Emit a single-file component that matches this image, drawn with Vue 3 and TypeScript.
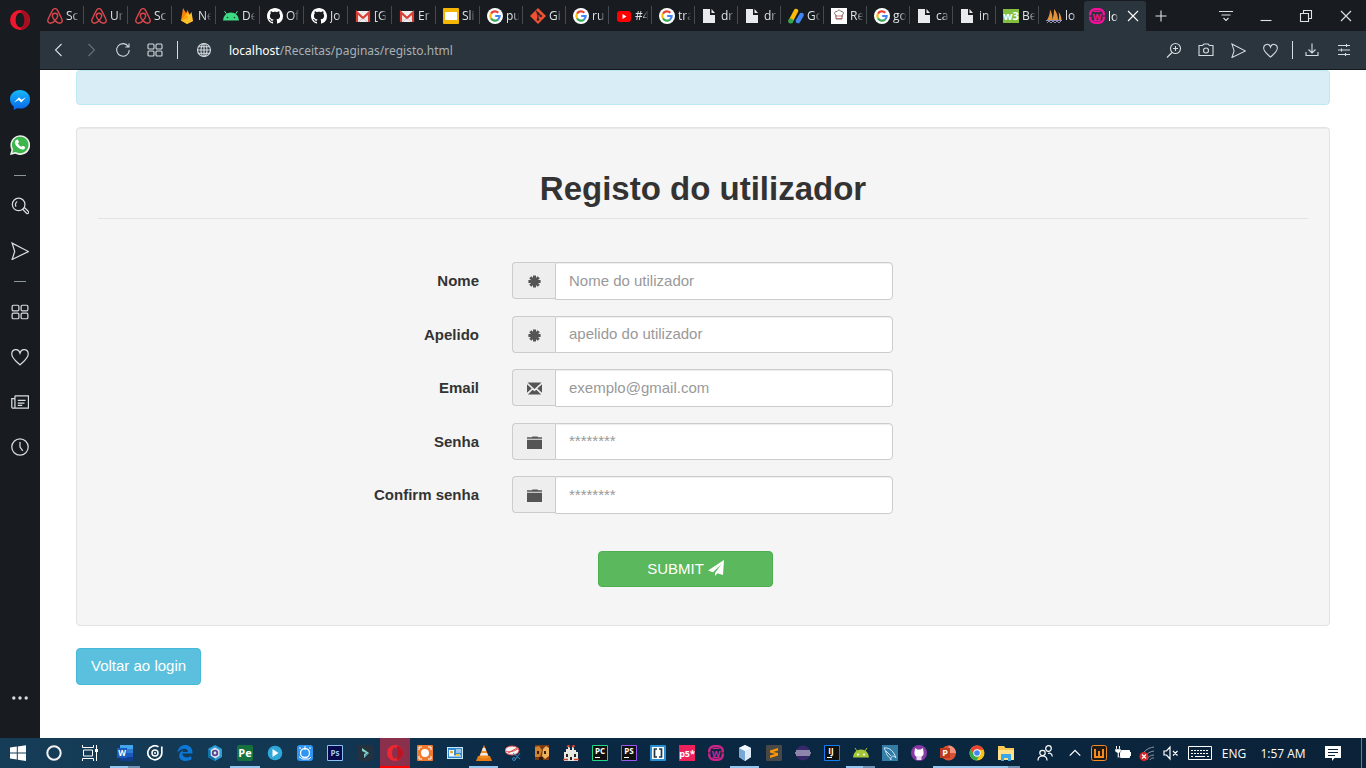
<script setup lang="ts">
import { ref } from 'vue'

interface Tab { icon: string; title: string }
interface Field { id: string; label: string; placeholder: string; type: string; icon: string }
interface Task { name: string; icon: string; state?: 'open' | 'stack' | 'active' }

const github = 'M8 0C3.58 0 0 3.58 0 8c0 3.54 2.29 6.53 5.47 7.59.4.07.55-.17.55-.38 0-.19-.01-.82-.01-1.49-2.01.37-2.53-.49-2.69-.94-.09-.23-.48-.94-.82-1.13-.28-.15-.68-.52-.01-.53.63-.01 1.08.58 1.23.82.72 1.21 1.87.87 2.33.66.07-.52.28-.87.51-1.07-1.78-.2-3.64-.89-3.64-3.95 0-.87.31-1.59.82-2.15-.08-.2-.36-1.02.08-2.12 0 0 .67-.21 2.2.82.64-.18 1.32-.27 2-.27s1.36.09 2 .27c1.53-1.04 2.2-.82 2.2-.82.44 1.1.16 1.92.08 2.12.51.56.82 1.27.82 2.15 0 3.07-1.87 3.75-3.65 3.95.29.25.54.73.54 1.48 0 1.07-.01 1.93-.01 2.2 0 .21.15.46.55.38A8.01 8.01 0 0 0 16 8c0-4.42-3.58-8-8-8z'

const letters = (text: string, x: number, y: number, size: number, fill: string) =>
  `<text x="${x}" y="${y}" font-family="Open Sans, sans-serif" font-weight="700" font-size="${size}" fill="${fill}" text-anchor="middle">${text}</text>`

const wamp = (color: string) =>
  `<rect x="1.200" y="1.200" width="13.600" height="13.600" rx="5" fill="none" stroke="${color}" stroke-width="2.400"/><path d="M0 8h3m10 0h3" stroke="#2b2430" stroke-width="1"/><path d="M4.500 3.500h7M4.500 12.500h7" stroke="${color}" stroke-width="1"/>${letters('W', 8, 11.5, 9, color)}`

// Every glyph is drawn on a 16 x 16 grid.
const art: Record<string, string> = {
  airbnb: '<path d="M8 12.500C6 10.300 5.300 9 5.300 7.900a2.700 2.700 0 0 1 5.400 0C10.700 9 10 10.300 8 12.500c-1.300 1.700-2.900 2.700-4.500 2.700-2 0-3.200-1.700-2.500-3.700C2.200 8.600 4.300 4.400 5.800 1.900 6.900.2 9.100.2 10.200 1.900c1.500 2.500 3.600 6.700 4.800 9.600.7 2-.5 3.700-2.500 3.700-1.600 0-3.200-1-4.500-2.700Z" fill="none" stroke="#d9474d" stroke-width="1.400"/>',
  firebase: '<path d="M2 12.500 4 0l3 5 1.500-3L14 13l-6 3Z" fill="#f5820d"/><path d="m2 12.500 6.500-8L10.500 7l2-3L14 13l-6 3Z" fill="#fbc02d"/><path d="m2 12.500 5-6.500 2 4Z" fill="#ffa000"/>',
  android: '<path d="M0 12.500a8 8 0 0 1 16 0Z" fill="#3ddc84"/><path d="m3.500 6-2-3m11 3 2-3" stroke="#3ddc84"/><circle cx="4.500" cy="9.500" r=".8" fill="#20332c"/><circle cx="11.500" cy="9.500" r=".8" fill="#20332c"/>',
  github: `<path d="${github}" fill="#fff"/>`,
  gmail: '<path d="M1 3h14v11H1Z" fill="#eee"/><path d="M2 14V4.500L8 10l6-5.500V14" fill="none" stroke="#d93f35" stroke-width="2.200"/><path d="m4 14 3-3.500m5 3.500-3-3.500" stroke="#c9c9c9"/>',
  slides: '<rect width="16" height="16" rx="1" fill="#f6b704"/><rect x="2" y="4" width="12" height="8" fill="#fff"/>',
  google: '<circle cx="8" cy="8" r="8" fill="#fff"/><g fill="none" stroke-width="2.100"><path d="M11.300 4.700A4.700 4.700 0 0 0 4 5.600" stroke="#ea4335"/><path d="M4 5.600a4.700 4.700 0 0 0 0 4.800" stroke="#fbbc05"/><path d="M4 10.400a4.700 4.700 0 0 0 7 1.200" stroke="#34a853"/><path d="M11 11.600A4.700 4.700 0 0 0 12.700 8H8.200" stroke="#4285f4"/></g>',
  git: '<path d="m8 0 8 8-8 8-8-8Z" fill="#f05033"/><path d="m6 3 5 5M8 5.500v6" stroke="#302222" stroke-width="1.200"/><circle cx="8" cy="5.500" r="1.300" fill="#302222"/><circle cx="10.800" cy="8" r="1.300" fill="#302222"/><circle cx="8" cy="11.500" r="1.300" fill="#302222"/>',
  youtube: '<rect x="1" y="3" width="14" height="11" rx="3" fill="#f00"/><path d="m6.500 6 4 2.500-4 2.500Z" fill="#fff"/>',
  file: '<path d="M1 1h7v6h5v8H1Z" fill="#e8eaed"/><path d="m9.500 1 3.500 4H9.500Z" fill="#e8eaed"/>',
  ads: '<path d="M8 3 3 12.500" stroke="#fbbc04" stroke-width="4.500" stroke-linecap="round"/><path d="m13.500 7-3.500 6" stroke="#4285f4" stroke-width="4.500" stroke-linecap="round"/><circle cx="2.700" cy="13" r="2.500" fill="#34a853"/>',
  chef: '<path d="M0 0h16v16H0Z" fill="#fff"/><path d="M5 7C2.500 6 3.500 3 6 3.500 7 1.500 9.500 2 10 3.500c3-.5 3 3 1 3.500v4H5Z" fill="none" stroke="#604a4a" stroke-width=".8"/><path d="M4 8h8M5 10.500h6" stroke="#b55" stroke-width=".8"/>',
  w3: `<path d="M0 1h16v14H0Z" fill="#83bf3f"/>${letters('w3', 8, 12, 11, '#fff')}`,
  sails: '<path d="M1 12C3 9 4 5 4 1.500 6 5 7 9 6 12Zm5 0c2-4 2-8 2-11 3 3 4 8 4 11Zm6.500 0c1-2.500.5-6 0-8 2 2 3 5.500 3 8Z" fill="#e69338"/><path d="M0 12.500h16M1 15l2-2 2 2 2-2 2 2 2-2 2 2 2-2" fill="none" stroke="#8f8fb3"/>',
  wampPink: wamp('#f5109a'),
  wampDark: wamp('#d0238a'),
  opera: '<ellipse cx="8" cy="8" rx="8" ry="8" fill="#ee172d"/><path d="M9 0c9 1 9 15 0 16Z" fill="#a60f20"/><ellipse cx="8" cy="8" rx="3.500" ry="5.900" fill="#181c20"/>',
  operaTask: '<circle cx="8" cy="8" r="8" fill="#ee2730"/><path d="M10 1c8 1 8 13 0 14Z" fill="#b81625"/><ellipse cx="8" cy="8" rx="3" ry="5.700" fill="#8b304c"/>',
  messenger: '<defs><linearGradient id="msg" x2="0" y2="1"><stop stop-color="#16b9fa"/><stop offset="1" stop-color="#0865ea"/></linearGradient></defs><path d="M8 0C3.500 0 0 3.200 0 7.400c0 2.400 1.100 4.400 3 5.700V16l2.700-1.500c5.500 1.400 10.300-2 10.300-7C16 3.200 12.500 0 8 0Z" fill="url(#msg)"/><path d="m3.200 10 4-4.200 2 2 3.600-2L9 10 7 8Z" fill="#fff"/>',
  whatsapp: '<path d="m0 16 1.200-4.200A7.900 7.900 0 1 1 4.300 15Z" fill="#f0f0ee"/><path d="m1.800 14.200.8-2.700a6.600 6.600 0 1 1 2 2Z" fill="#3cb54a"/><path d="M5.300 3.800c.8-.6 1.300.2 1.900 1.700l-.8 1.200c.6 1.200 1.500 2 2.800 2.700l1-.9c1.500.5 2 .9 1.900 1.600-.8 2.500-3.700 1.500-5.700-.1-2.500-2.100-3.600-4.900-1.100-6.200Z" fill="#fff"/>',
  search: '<circle cx="6.800" cy="6.600" r="5.600"/><path d="m10.500 11 1.500-1.600 3.300 3.300a1.100 1.100 0 0 1-1.500 1.700ZM4.500 8.500c-1-1.500-.5-3.500 1-4.500"/>',
  send: '<path d="M1 1 15.500 8.500 1 15.500 3.300 8.500Z"/>',
  grid: '<rect x="1" y="2" width="6" height="5" rx="1"/><rect x="9" y="2" width="6" height="5" rx="1"/><rect x="1" y="9" width="6" height="5" rx="1"/><rect x="9" y="9" width="6" height="5" rx="1"/>',
  heart: '<path d="M8 4.500C6.500-.5.500 1.200.7 5.600.8 9.200 4.200 11.500 8 15c3.800-3.500 7.200-5.800 7.300-9.400C15.500 1.200 9.500-.5 8 4.500Z"/>',
  news: '<path d="M3.500 2.500h12v11H1.700A1 1 0 0 1 .7 12.500V5h2.800m0-2.500V13M6 6.500h7M6 9h6M6 11h4"/>',
  clock: '<circle cx="8" cy="8" r="7.300"/><path d="M8 3.500V8l2.500 3.500"/>',
  dots: '<g fill="currentColor" stroke="none"><circle cx="2.500" cy="8" r="1.500"/><circle cx="8" cy="8" r="1.500"/><circle cx="13.500" cy="8" r="1.500"/></g>',
  back: '<path d="M10.500 2 4.500 8l6 6"/>',
  forward: '<path d="m5.500 2 6 6-6 6"/>',
  reload: '<path d="M13.300 4.500A6.300 6.300 0 1 0 14.300 8M14 1.500V5h-3.700"/>',
  globe: '<circle cx="8" cy="8" r="6.500"/><ellipse cx="8" cy="8" rx="3" ry="6.500"/><path d="M1.500 8h13M2.500 4.800h11m-11 6.400h11M8 1.500v13"/>',
  zoomIn: '<circle cx="9.500" cy="6.500" r="5"/><path d="M6 10.500 1 15.500M9.500 4v5M7 6.500h5"/>',
  camera: '<path d="M1 3.500h3.500L6 2h4l1.500 1.500H15v10H1Z"/><circle cx="8" cy="8.500" r="2.500"/>',
  download: '<path d="M8 1.500v9M4.500 7.500 8 11l3.500-3.500M2 10v3.500h12V10"/>',
  sliders: '<path d="M2 3.500h12M2 8h12M2 12.500h12M10.500 2v3M5.500 6.500v3M9.500 11v3"/>',
  plus: '<path d="M8 2.500v11M2.500 8h11"/>',
  close: '<path d="m3 3 10 10M13 3 3 13"/>',
  minimize: '<path d="M2.500 12.500h11"/>',
  restore: '<path d="M2.500 5.500h8v8h-8ZM5.500 5V2.500h8v8H11"/>',
  menu: '<path d="M1 3.500h14M3.500 7h9M5.500 10 8 12.500l2.500-2.500"/>',
  asterisk: '<g fill="none" stroke="currentColor" stroke-width="3.200"><path d="M8 1.500v13M1.500 8h13M3.500 3.500l9 9M12.500 3.500l-9 9"/></g>',
  envelope: '<path d="M.5 1.500h15L8 8.500ZM0 3.500 5 8 0 12.500ZM16 3.500 11 8l5 4.500ZM1 14.500l5-5.300 2 1.800 2-1.800 5 5.300Z" fill="currentColor"/>',
  folder: '<path d="M0 5h16v10H0ZM0 4V2.500h5l1-1h5l1 1h4V4Z" fill="currentColor"/>',
  plane: '<path d="M16 0 0 10.500l5 1.700L13.500 4 7 13v3l2.500-2.700L15 15Z" fill="currentColor"/>',
  windows: '<path d="m0 2.500 6.800-1v6H0Zm7.800-1.100L16 .2v7.300H7.800ZM0 8.500h6.800v6L0 13.500Zm7.800 0H16V16l-8.200-1.300Z" fill="#fff"/>',
  cortana: '<circle cx="8" cy="8" r="6.700" fill="none" stroke="#f2f2f2" stroke-width="2"/>',
  taskview: '<path d="M.5 0v2.500h11V0M1.500 5h9v6h-9ZM.5 16v-2.500h11V16M14.500 0v16" fill="none" stroke="#fff"/><path d="M13 4h3v3h-3Z" fill="#fff"/>',
  word: `<path d="M3 0h13v4H3Z" fill="#41a5ee"/><path d="M3 4h13v4H3Z" fill="#2b7cd3"/><path d="M3 8h13v4H3Z" fill="#185abd"/><path d="M3 12h13v4H3Z" fill="#103f91"/><path d="M0 3h10v10H0Z" fill="#1c5abb"/>${letters('W', 5, 11, 8, '#fff')}`,
  groove: '<path d="M11.500 1.800A7 7 0 1 0 14.800 7V1.500" fill="none" stroke="#fff" stroke-width="1.700"/><circle cx="8" cy="8" r="3" fill="none" stroke="#fff" stroke-width="1.500"/><circle cx="8" cy="8" r="1" fill="#fff"/>',
  edge: '<path d="M.5 7.500C1.500-2.500 16-2.500 15.500 8.500H5.200c.5 4.500 5.800 4.600 9.100 2.800v3.200C8 18-.5 14.800 3 7.800 4 6 5.800 5 7.500 4.700 6 5.200 5.400 6.300 5.300 6.900h5.600c0-4.800-7.500-4-10.400.6Z" fill="#0b78d7"/>',
  hex: '<path d="m8 0 7 4v8l-7 4-7-4V4Z" fill="#2ba0d8"/><path d="m8 2.500 4.500 2.800v5.400L8 13.500l-4.500-2.800V5.300Z" fill="#e7e4f2"/><path d="M1 4v8l7 4v-2.500l-4.500-3V5.500Z" fill="#1272a8"/><circle cx="8" cy="8" r="3.200" fill="#56478c"/><circle cx="8" cy="8" r="1.400" fill="#e7e4f2"/>',
  pe: `<rect width="16" height="16" rx="2" fill="#15713d"/>${letters('Pe', 8, 12, 11, '#fff')}`,
  player: '<circle cx="8" cy="8" r="7.300" fill="#2da8d8"/><path d="m5.500 4 6 4-6 4Z" fill="#fff"/>',
  gear: '<rect width="16" height="16" rx="3" fill="#2f94f3"/><circle cx="8" cy="8" r="4.500" fill="none" stroke="#fff" stroke-width="1.300"/><path d="M8 1v4M2 3h2m8 0h2M2 12c2 0 2 2 4 2h6l2-2" fill="none" stroke="#fff"/>',
  photoshop: `<path d="M.5.5h15v15H.5Z" fill="#06094b" stroke="#8cbff5"/>${letters('Ps', 8, 11, 8, '#9dc9f5')}`,
  filmora: '<rect width="16" height="16" rx="2" fill="#25313e"/><path d="m5 3 7 5-5 5V9l2-1-4-2Z" fill="#82d3c5"/><path d="m9 9 3-1-5 5Z" fill="#4588ac"/>',
  recorder: '<rect width="16" height="16" rx="1" fill="#ee7b2f"/><circle cx="8" cy="8" r="4" fill="#fff"/><path d="M2 5V2h3m6 0h3v3m0 6v3h-3m-6 0H2v-3" fill="none" stroke="#fff"/>',
  contact: '<path d="M0 2h16v12H0Z" fill="#c6e8fb"/><path d="M1 3h14v10H1Z" fill="#328bd1"/><path d="M2 5h5v6H2Z" fill="#fff"/><circle cx="4.500" cy="7" r="1.500" fill="#e5a332"/><path d="M9 5h5M9 7h5M2 11h12" stroke="#fff"/><path d="M9 9h4v2H9Z" fill="#f6c94e"/>',
  vlc: '<path d="m2 11-2 5h16l-2-5Z" fill="#e57b13"/><path d="m8 0 5 12c-2 2-8 2-10 0Z" fill="#f68c1f"/><path d="m6.800 3h2.400L10 6H6Zm-1.800 5h6l1 2.500H4Z" fill="#eee"/>',
  snip: '<ellipse cx="7" cy="5.500" rx="7" ry="4.500" fill="#f4f4f4" stroke="#d94845"/><path d="M1 6C5 8 10 6 14 3M3 8l9-5" stroke="#db4c4a" fill="none"/><path d="m8 8 7 6m0-6-5 7" stroke="#3b89bf"/><circle cx="9" cy="14" r="1.500" fill="none" stroke="#3b89bf"/>',
  game: '<path d="M1 0h14v15H1Z" fill="#7a3a12"/><path d="m1 2 4-1 3 4-2 7H1Z" fill="#d0852c"/><path d="m9 4 3-3 3 2v8l-4 3-3-3Z" fill="#eeb05c"/><path d="M4 6v3m2 3v3M11 6v3m-3 3v3" stroke="#291407" stroke-width="1.800"/>',
  castle: '<path d="M1 16V7h2V4h2V1l2 2v2h2V1l2 2v2h2v2h2v9Z" fill="#e9e7e2"/><path d="M3 9h2v3H3Zm8 0h2v3h-2ZM7 12h2v3H7Z" fill="#252525"/><path d="M4 2 6 0v2m3 0 2-2v2M0 14.500h5m6 0h5" stroke="#d3422e" stroke-width="1.500"/>',
  pycharm: `<path d="M.5.5h15v15H.5Z" fill="#101010" stroke="#21d789"/>${letters('PC', 8, 9, 8, '#fff')}<path d="M3 12.500h5" stroke="#fff"/>`,
  phpstorm: `<path d="M.5.5h15v15H.5Z" fill="#101010" stroke="#9b57ef"/>${letters('PS', 8, 9, 8, '#fff')}<path d="M3 12.500h5" stroke="#fff"/>`,
  brackets: '<rect width="16" height="16" rx="1" fill="#2a8fd0"/><path d="M2 2h12v12H2Z" fill="#fff"/><path d="M7 4H4.500v8H7m2-8h2.500v8H9" fill="none" stroke="#213449" stroke-width="1.700"/>',
  p5: `<path d="M0 0h16v16H0Z" fill="#ed225d"/>${letters('p5*', 8, 12, 9, '#fff')}`,
  cube: '<path d="m8 0 6 3v9l-6 4-6-4V3Z" fill="#bad6f0"/><path d="m2 3 6 3v10l-6-4Z" fill="#7ba7d5"/><path d="m8 6 6-3v9l-6 4Z" fill="#dceaf9"/><path d="m2 3 6-3 6 3-6 3Z" fill="#f3faff"/>',
  sublime: '<rect width="16" height="16" rx="1" fill="#484848"/><path d="m12 3-8 2.500v2L9 9l-5 1.500V13l8-2.500V8L7 7l5-1.500Z" fill="#ff9800"/>',
  eclipse: '<circle cx="8" cy="8" r="7.500" fill="#35296a"/><path d="M1 6h14M0 8h16M1 10h14" stroke="#e5e1ee" stroke-width="1.200"/>',
  intellij: `<path d="M.5.5h15v15H.5Z" fill="#101010" stroke="#147ef5"/>${letters('IJ', 7, 9, 8, '#fff')}<path d="M3 12.500h5" stroke="#fff"/>`,
  androidTask: '<path d="M0 12.500a8 8 0 0 1 16 0Z" fill="#a4c639"/><path d="m4 6-2-3m10 3 2-3" stroke="#a4c639"/><circle cx="5" cy="9.500" r="1" fill="#fff"/><circle cx="11" cy="9.500" r="1" fill="#fff"/>',
  mysql: '<path d="M0 0h16v16H0Z" fill="#347da6"/><path d="M2 3c6-1 10 4 12 10-3-4-6-1-5 2-1-3-4-3-5-8ZM4 6l5 5" fill="none" stroke="#c9e5f4"/>',
  desktop: '<circle cx="8" cy="8" r="8" fill="#8739a6"/><path d="m4 3 2.500 1.500h3L12 3l.5 4c.5 3-1 5-4.500 5S3 10 3.500 7Z" fill="#fff"/><path d="M5.500 11h5v4h-5Z" fill="#e9dcf0"/>',
  powerpoint: `<circle cx="8.500" cy="8" r="7.500" fill="#d75235"/><path d="M8.500.5a7.500 7.500 0 0 1 7.500 7.500H8.500Z" fill="#f2937e"/><path d="M0 3h10v10H0Z" fill="#bd3a1c"/>${letters('P', 5, 11, 9, '#fff')}`,
  chrome: '<circle cx="8" cy="8" r="7.500" fill="#fbc116"/><path d="M1.500 4.300A7.500 7.500 0 0 1 14.700 4.700H8L5 10Z" fill="#e74436"/><path d="M1.500 4.300a7.500 7.500 0 0 0 6 11.200L11 9.500 5 10Z" fill="#35a852"/><circle cx="8" cy="8" r="3.700" fill="#fff"/><circle cx="8" cy="8" r="2.800" fill="#4285f4"/>',
  explorer: '<path d="M0 1h6l1.500 2H16v12H0Z" fill="#f7ca55"/><path d="M0 5h16v10H0Z" fill="#ffe18a"/><path d="M3 16V9h10v7h-3v-3H6v3Z" fill="#39a8e8"/>',
  people: '<g fill="none" stroke="#fff" stroke-width="1.200"><circle cx="11.500" cy="3.500" r="2.800"/><circle cx="5.500" cy="8" r="2.700"/><path d="M1 15.500c0-6 9-6 9 0M11 8.500c2.500-1 4 .5 4.300 3"/></g>',
  chevron: '<path d="m2 11 6-6 6 6" fill="none" stroke="#fff" stroke-width="1.500"/>',
  wampTray: `<rect x=".5" y=".5" width="15" height="15" rx="2" fill="#201b18" stroke="#f58a1f"/><path d="M4 4v8h8V4M8 6v6" fill="none" stroke="#f58a1f" stroke-width="2"/>`,
  battery: '<path d="M5.500 5.500h9v7h-9ZM15 7.500h1v3h-1Z" fill="#fff" stroke="#fff"/><path d="M1.500 1v3m3-3v3" stroke="#fff"/><path d="M0 4h6v2.500L4 8v3.500h1v1H2.500V8L0 6.500Z" fill="#fff" stroke="#0a2438" stroke-width=".4"/>',
  wifi: '<g fill="none" stroke="#8897a5"><path d="M2 14C3 7 8 3 15 2M5 15c1-5 4-8 10-9M8 15c1-3 3-5 7-5M11 15c1-2 2-2 4-2"/></g><circle cx="5" cy="11.500" r="4.500" fill="#d42a2a"/><path d="m3 9.500 4 4m0-4-4 4" stroke="#fff" stroke-width="1.200"/>',
  mute: '<path d="M1 6h2.500l3.500-4v12L3.500 10H1ZM10 6l4.500 4.500m0-4.500L10 10.500" fill="none" stroke="#fff" stroke-width="1.200"/>',
  notice: '<path d="M0 1h16v12H9.500l-2.500 3v-3H0Z" fill="#fff"/><path d="M3 4.500h10M3 7.500h10M3 10.500h7" stroke="#0a2238"/>',
}

const tabs: Tab[] = [
  { icon: 'airbnb', title: 'Sc' }, { icon: 'airbnb', title: 'Ur' }, { icon: 'airbnb', title: 'Sc' },
  { icon: 'firebase', title: 'Ne' }, { icon: 'android', title: 'De' }, { icon: 'github', title: 'Of' },
  { icon: 'github', title: 'Jo' }, { icon: 'gmail', title: '[G' }, { icon: 'gmail', title: 'Er' },
  { icon: 'slides', title: 'Sli' }, { icon: 'google', title: 'pu' }, { icon: 'git', title: 'Gi' },
  { icon: 'google', title: 'ru' }, { icon: 'youtube', title: '#4' }, { icon: 'google', title: 'tra' },
  { icon: 'file', title: 'dr' }, { icon: 'file', title: 'dr' }, { icon: 'ads', title: 'Go' },
  { icon: 'chef', title: 'Re' }, { icon: 'google', title: 'go' }, { icon: 'file', title: 'ca' },
  { icon: 'file', title: 'in' }, { icon: 'w3', title: 'Be' }, { icon: 'sails', title: 'lo' },
]

const fields: Field[] = [
  { id: 'nome', label: 'Nome', placeholder: 'Nome do utilizador', type: 'text', icon: 'asterisk' },
  { id: 'apelido', label: 'Apelido', placeholder: 'apelido do utilizador', type: 'text', icon: 'asterisk' },
  { id: 'email', label: 'Email', placeholder: 'exemplo@gmail.com', type: 'email', icon: 'envelope' },
  { id: 'senha', label: 'Senha', placeholder: '********', type: 'password', icon: 'folder' },
  { id: 'confirmar', label: 'Confirm senha', placeholder: '********', type: 'password', icon: 'folder' },
]
const values = ref<Record<string, string>>({ nome: '', apelido: '', email: '', senha: '', confirmar: '' })

const sideGroups: string[][] = [['messenger', 'whatsapp'], ['search', 'send'], ['grid', 'heart', 'news', 'clock']]

const system: Task[] = [
  { name: 'Iniciar', icon: 'windows' }, { name: 'Cortana', icon: 'cortana' }, { name: 'Vista de tarefas', icon: 'taskview' },
]
const wideTasks: Task[] = [
  { name: 'Word', icon: 'word', state: 'stack' }, { name: 'Groove', icon: 'groove' }, { name: 'Edge', icon: 'edge' },
  { name: 'Hex', icon: 'hex' }, { name: 'Pe', icon: 'pe', state: 'open' }, { name: 'Player', icon: 'player' },
  { name: 'Gear', icon: 'gear' }, { name: 'Photoshop', icon: 'photoshop' }, { name: 'Filmora', icon: 'filmora' },
  { name: 'Opera', icon: 'operaTask', state: 'active' }, { name: 'Recorder', icon: 'recorder' },
]
const narrowTasks: Task[] = [
  { name: 'Contact', icon: 'contact' }, { name: 'VLC', icon: 'vlc', state: 'open' }, { name: 'Snip', icon: 'snip' },
  { name: 'Game', icon: 'game' }, { name: 'Castle', icon: 'castle' }, { name: 'PyCharm', icon: 'pycharm' },
  { name: 'PhpStorm', icon: 'phpstorm' }, { name: 'Brackets', icon: 'brackets' }, { name: 'p5', icon: 'p5' },
  { name: 'Wamp', icon: 'wampDark' }, { name: 'VirtualBox', icon: 'cube', state: 'open' }, { name: 'Sublime', icon: 'sublime' },
  { name: 'Eclipse', icon: 'eclipse' }, { name: 'IntelliJ', icon: 'intellij' }, { name: 'Android Studio', icon: 'androidTask', state: 'stack' },
  { name: 'MySQL', icon: 'mysql' }, { name: 'GitHub Desktop', icon: 'desktop' }, { name: 'PowerPoint', icon: 'powerpoint', state: 'open' },
  { name: 'Chrome', icon: 'chrome', state: 'open' }, { name: 'Explorador', icon: 'explorer', state: 'stack' },
]
</script>

<template>
  <div class="desktop">
    <div class="browser">
      <aside class="sidebar">
        <button class="brand" type="button" aria-label="Opera"><svg viewBox="0 0 16 16" v-html="art.opera"></svg></button>
        <div v-for="(group, g) in sideGroups" :key="g" class="side-group">
          <button v-for="name in group" :key="name" type="button" :aria-label="name" class="side-button">
            <svg class="line" :class="{ app: g === 0 }" viewBox="0 0 16 16" v-html="art[name]"></svg>
          </button>
        </div>
        <button type="button" class="side-button more" aria-label="Mais"><svg class="line" viewBox="0 0 16 16" v-html="art.dots"></svg></button>
      </aside>

      <div class="window">
        <header class="tabbar">
          <nav class="tabs">
            <button v-for="(tab, i) in tabs" :key="i" type="button" class="tab">
              <svg viewBox="0 0 16 16" v-html="art[tab.icon]"></svg><span class="tab-title">{{ tab.title }}</span>
            </button>
          </nav>
          <div class="tab active">
            <svg viewBox="0 0 16 16" v-html="art.wampPink"></svg><span class="tab-title">loc</span>
            <button type="button" class="tab-close" aria-label="Fechar separador"><svg class="line" viewBox="0 0 16 16" v-html="art.close"></svg></button>
          </div>
          <button type="button" class="new-tab" aria-label="Novo separador"><svg class="line" viewBox="0 0 16 16" v-html="art.plus"></svg></button>
          <div class="controls">
            <button v-for="name in ['menu', 'minimize', 'restore', 'close']" :key="name" type="button" :aria-label="name">
              <svg class="line" viewBox="0 0 16 16" v-html="art[name]"></svg>
            </button>
          </div>
        </header>

        <div class="toolbar">
          <button v-for="name in ['back', 'forward', 'reload', 'grid']" :key="name" type="button" class="tool" :class="name" :aria-label="name">
            <svg class="line" viewBox="0 0 16 16" v-html="art[name]"></svg>
          </button>
          <span class="divider"></span>
          <button type="button" class="tool site" aria-label="Site"><svg class="line" viewBox="0 0 16 16" v-html="art.globe"></svg></button>
          <button type="button" class="address"><strong>localhost</strong>/Receitas/paginas/registo.html</button>
          <button v-for="name in ['zoomIn', 'camera', 'send', 'heart']" :key="name" type="button" class="tool" :class="name" :aria-label="name">
            <svg class="line" viewBox="0 0 16 16" v-html="art[name]"></svg>
          </button>
          <span class="divider"></span>
          <button v-for="name in ['download', 'sliders']" :key="name" type="button" class="tool" :aria-label="name">
            <svg class="line" viewBox="0 0 16 16" v-html="art[name]"></svg>
          </button>
        </div>

        <main class="page">
          <div class="alert"></div>
          <section class="well">
            <h1>Registo do utilizador</h1>
            <form @submit.prevent>
              <div v-for="field in fields" :key="field.id" class="row">
                <label :for="field.id">{{ field.label }}</label>
                <div class="group">
                  <span class="addon"><svg viewBox="0 0 16 16" v-html="art[field.icon]"></svg></span>
                  <input :id="field.id" v-model="values[field.id]" :type="field.type" :placeholder="field.placeholder">
                </div>
              </div>
              <button type="submit" class="submit">SUBMIT <svg viewBox="0 0 16 16" v-html="art.plane"></svg></button>
            </form>
          </section>
          <a class="login" href="#login">Voltar ao login</a>
        </main>
      </div>
    </div>

    <footer class="taskbar">
      <button v-for="task in system" :key="task.name" type="button" class="task system" :aria-label="task.name"><svg viewBox="0 0 16 16" v-html="art[task.icon]"></svg></button>
      <div class="apps wide">
        <button v-for="task in wideTasks" :key="task.name" type="button" class="task" :class="task.state" :aria-label="task.name"><svg viewBox="0 0 16 16" v-html="art[task.icon]"></svg></button>
      </div>
      <div class="apps">
        <button v-for="task in narrowTasks" :key="task.name" type="button" class="task" :class="task.state" :aria-label="task.name"><svg viewBox="0 0 16 16" v-html="art[task.icon]"></svg></button>
      </div>
      <div class="tray">
        <button v-for="name in ['people', 'chevron', 'wampTray', 'battery', 'wifi', 'mute']" :key="name" type="button" :class="name" :aria-label="name"><svg viewBox="0 0 16 16" v-html="art[name]"></svg></button>
        <button type="button" class="keyboard" aria-label="Teclado">
          <svg viewBox="0 0 24 14"><path d="M.5.5h23v13H.5Z" fill="none" stroke="#fff" /><path d="M3 4.500h18M3 7.500h18" stroke="#fff" stroke-width="1" stroke-dasharray="2 1" /><path d="M3 10.500h2m2 0h10m2 0h2" stroke="#fff" /></svg>
        </button>
        <button type="button" class="language">ENG</button>
        <button type="button" class="time">1:57 AM</button>
        <button type="button" class="notices" aria-label="Notificações"><svg viewBox="0 0 16 16" v-html="art.notice"></svg></button>
        <span class="peek"></span>
      </div>
    </footer>
  </div>
</template>

<style>
body { margin: 0; background: #fff; }
</style>

<style scoped>
* { box-sizing: border-box; }
button { margin: 0; padding: 0; border: 0; background: none; color: inherit; font: inherit; }
svg { display: block; width: 16px; height: 16px; flex: none; }
.line { fill: none; stroke: currentColor; stroke-width: 1.1; }
.desktop { display: flex; flex-direction: column; min-height: 100vh; font-family: "Open Sans", "Noto Sans", sans-serif; font-size: 12px; }
.browser { display: flex; flex: 1; }

.sidebar { display: flex; flex-direction: column; width: 40px; background: #181c20; color: #d5dce2; }
.brand { display: flex; align-items: center; justify-content: center; height: 40px; margin-bottom: 37px; }
.brand svg { width: 20px; height: 20px; }
.side-group { display: flex; flex-direction: column; }
.side-group + .side-group::before { content: ""; width: 12px; height: 1px; margin: 8px auto 7px; background: #8b969f; }
.side-button { display: flex; align-items: center; justify-content: center; height: 45px; }
.side-button svg { width: 18px; height: 18px; }
.side-button svg.app { width: 20px; height: 20px; stroke: none; }
.more { margin-top: auto; margin-bottom: 18px; }

.window { display: flex; flex: 1; flex-direction: column; min-width: 0; }
.tabbar { display: flex; height: 31px; background: #181c20; color: #dfe3e6; }
.tabs { display: flex; }
.tab { display: flex; align-items: center; width: 44px; padding-left: 7px; gap: 3px; border-image: linear-gradient(transparent 7px, #444a50 7px, #444a50 23px, transparent 23px) 1; border-right: 1px solid; }
.tab:nth-child(n + 11) { width: 43px; }
.tab-title { width: 15px; overflow: hidden; font-size: 12px; text-align: left; white-space: nowrap; mask-image: linear-gradient(90deg, #000 45%, transparent 90%); }
.tabs .tab:last-child { border-right-color: transparent; border-image: none; }
.tab.active { width: 62px; margin: 1px 0 0 2px; padding-left: 5px; border: 0; border-radius: 3px 3px 0 0; border-image: none; background: #2b353d; color: #fff; }
.active .tab-title { width: 12px; }
.tab-close { margin-left: 2px; }
.new-tab { display: flex; align-items: center; justify-content: center; width: 30px; }
.controls { display: flex; margin-left: auto; }
.controls button { display: flex; align-items: center; justify-content: center; width: 40px; }

.toolbar { display: flex; align-items: center; height: 39px; padding: 0 6px 0 3px; border-bottom: 1px solid #15191c; background: #2b353d; color: #d5dce2; }
.tool { display: flex; align-items: center; justify-content: center; width: 32px; height: 32px; }
.tool.forward { color: #66717a; }
.tool.send svg, .tool.heart svg { width: 15px; height: 15px; }
.divider { width: 1px; height: 18px; margin: 0 3px 0 6px; background: #d5dce2; }
.site { margin-left: 7px; }
.address { flex: 1; padding-left: 9px; color: #a9b0b6; text-align: left; font-family: "Noto Sans", "Open Sans", sans-serif; }
.address strong { color: #fff; font-weight: 400; }

.page { flex: 1; padding: 0 36px 53px; background: #fff; color: #333; font-family: "Liberation Sans", Arial, sans-serif; font-size: 15px; line-height: 21px; }
.alert { height: 35px; margin-bottom: 22px; border: 1px solid #bce8f1; border-radius: 4px; background: #d9edf7; }
.well { margin-bottom: 22px; padding: 41px 21px 38px; border: 1px solid #e3e3e3; border-radius: 4px; background: #f5f5f5; box-shadow: inset 0 1px 1px rgba(0, 0, 0, .05); }
h1 { margin: 0 0 43px; padding-bottom: 9px; border-bottom: 1px solid #e3e3e3; font-size: 33px; font-weight: 700; line-height: 40px; text-align: center; }
form { display: flex; flex-direction: column; gap: 16px; margin: 0 -16px; }
.row { display: grid; grid-template-columns: repeat(3, 1fr); height: 38px; }
.row:nth-child(even) { height: 37px; }
label { padding: 8px 17px 0 0; font-weight: 700; text-align: right; }
.group { display: flex; align-items: flex-start; height: inherit; padding: 0 17px 0 16px; }
.addon { display: flex; align-items: center; justify-content: center; width: 43px; height: 37px; border: 1px solid #ccc; border-right: 0; border-radius: 4px 0 0 4px; background: #eee; color: #555; }
.addon svg { width: 15px; height: 15px; margin-top: 2px; }
input { flex: 1; min-width: 0; height: 100%; padding: 0 13px 2px; border: 1px solid #ccc; border-radius: 0 4px 4px 0; outline: 0; background: #fff; box-shadow: inset 0 1px 1px rgba(0, 0, 0, .075); color: #555; font: inherit; }
input::placeholder { color: #999; opacity: 1; }
.submit { display: flex; align-items: center; justify-content: center; align-self: center; gap: 4px; width: 175px; height: 36px; margin: 21px 35px 0 0; padding-bottom: 2px; border: 1px solid #4cae4c; border-radius: 4px; background: #5cb85c; color: #fff; }
.login { display: block; width: fit-content; padding: 6px 14px 8px; border: 1px solid #46b8da; border-radius: 4px; background: #5bc0de; color: #fff; text-decoration: none; }

.taskbar { display: flex; height: 30px; background: linear-gradient(90deg, #163d57, #123652 25%, #0a2944 38%, #0a2740 70%, #0b2238); color: #fff; }
.task { display: flex; align-items: center; justify-content: center; width: 29px; }
.system { width: 36px; }
.apps { display: flex; }
.apps.wide { margin-left: 2px; }
.wide .task { width: 30px; }
.open, .stack { background: linear-gradient(#93c5ee, #93c5ee) center bottom / 20px 2px no-repeat; }
.open { background-size: 100% 2px; }
.stack { background: linear-gradient(90deg, #93c5ee 60%, #6f93b3 60%) center bottom / 100% 2px no-repeat; }
.active.task { background: #8b304c; box-shadow: inset 0 -2px #f00; }
.tray { display: flex; align-items: center; margin-left: auto; }
.tray button { display: flex; align-items: center; justify-content: center; width: 24px; height: 30px; }
.tray .people { width: 36px; }
.tray .chevron svg { width: 14px; height: 14px; }
.tray .keyboard { width: 34px; }
.keyboard svg { width: 24px; height: 14px; }
.tray .language { width: 34px; }
.tray .time { width: 64px; }
.tray .notices { width: 36px; }
.peek { width: 1px; height: 30px; margin: 0 4px 0 10px; background: #6b7c8a; }
</style>
